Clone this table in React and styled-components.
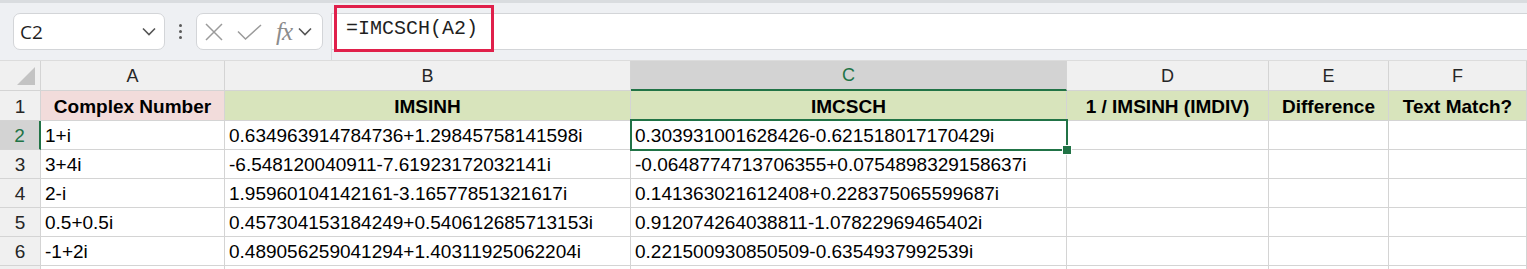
import React from "react";
import styled, { createGlobalStyle, css } from "styled-components";

const GREEN = "#217346";
const GRID = "#d4d4d4";

const GlobalStyle = createGlobalStyle`
  html, body {
    margin: 0;
    padding: 0;
    background: #ffffff;
    overflow: hidden;
  }
  * {
    box-sizing: border-box;
  }
`;

const columns = [
  { key: "A", width: 184 },
  { key: "B", width: 406 },
  { key: "C", width: 436 },
  { key: "D", width: 202 },
  { key: "E", width: 120 },
  { key: "F", width: null },
];

const headers = [
  "Complex Number",
  "IMSINH",
  "IMCSCH",
  "1 / IMSINH (IMDIV)",
  "Difference",
  "Text Match?",
];

const rows = [
  ["1+i", "0.634963914784736+1.29845758141598i", "0.303931001628426-0.621518017170429i"],
  ["3+4i", "-6.548120040911-7.61923172032141i", "-0.0648774713706355+0.0754898329158637i"],
  ["2-i", "1.95960104142161-3.16577851321617i", "0.141363021612408+0.228375065599687i"],
  ["0.5+0.5i", "0.457304153184249+0.540612685713153i", "0.912074264038811-1.07822969465402i"],
  ["-1+2i", "0.489056259041294+1.40311925062204i", "0.221500930850509-0.6354937992539i"],
];

const Page = styled.div`
  width: 1527px;
  height: 269px;
  overflow: hidden;
  font-family: "Liberation Sans", Arial, sans-serif;
`;

const Toolbar = styled.div`
  height: 60px;
  display: flex;
  align-items: flex-start;
  background: #eef0f3;
  border-top: 3px solid #d9dcdf;
  padding-top: 10px;
`;

const NameBox = styled.div`
  margin-left: 13px;
  width: 152px;
  height: 37px;
  background: #ffffff;
  border: 1px solid #d3d5d8;
  border-radius: 7px;
  display: flex;
  align-items: center;
  justify-content: space-between;
  padding: 0 8px 0 6px;
  font-family: "Open Sans", "Noto Sans", sans-serif;
  font-size: 19px;
  color: #1f1f1f;
`;

const Dots = styled.div`
  width: 31px;
  height: 37px;
  display: flex;
  flex-direction: column;
  align-items: center;
  justify-content: center;
  gap: 3px;
  span {
    width: 3px;
    height: 3px;
    border-radius: 50%;
    background: #5a5a5a;
  }
`;

const FxBox = styled.div`
  width: 127px;
  height: 37px;
  background: #ffffff;
  border: 1px solid #d3d5d8;
  border-radius: 7px;
  display: flex;
  align-items: center;
  padding-left: 8px;
  gap: 14px;
`;

const FxLabel = styled.span`
  font-family: "Liberation Serif", "DejaVu Serif", serif;
  font-style: italic;
  font-size: 25px;
  color: #8c8c8c;
  letter-spacing: -1px;
  margin-right: -8px;
`;

const FormulaArea = styled.div`
  flex: 1;
  margin-left: 8px;
  height: 47px;
  border-left: 1px solid #d6d8db;
  display: flex;
  align-items: flex-start;
`;

const FormulaInput = styled.div`
  flex: 1;
  height: 37px;
  background: #ffffff;
  border-top: 1px solid #d3d5d8;
  border-bottom: 1px solid #d3d5d8;
  display: flex;
  align-items: flex-start;
  padding-left: 2px;
`;

const Highlight = styled.span`
  margin-top: -9px;
  width: 160px;
  height: 47px;
  border: 3px solid #e0204b;
  display: flex;
  align-items: center;
  padding-left: 9px;
  padding-bottom: 1px;
  font-family: "Liberation Mono", "DejaVu Sans Mono", monospace;
  font-size: 20px;
  color: #1f1f1f;
`;

const Grid = styled.div`
  display: grid;
  grid-template-columns: 41px ${columns.map((c) => (c.width ? `${c.width}px` : "1fr")).join(" ")};
  grid-template-rows: 30px 30px repeat(6, 29px);
  border-top: 1px solid #dcdcdc;
`;

const headerBase = css`
  background: #f0f0f0;
  border-right: 1px solid ${GRID};
  border-bottom: 1px solid ${GRID};
  display: flex;
  align-items: center;
  justify-content: center;
  color: #262626;
`;

const Corner = styled.div`
  ${headerBase};
  position: relative;
  &::after {
    content: "";
    position: absolute;
    left: 17px;
    top: 6px;
    width: 18px;
    height: 18px;
    background: #c3c3c3;
    clip-path: polygon(100% 0, 100% 100%, 0 100%);
  }
`;

const ColHeader = styled.div`
  ${headerBase};
  font-size: 18px;
  padding-top: 1px;
  ${(p) =>
    p.$active &&
    css`
      background: #d3d3d3;
      color: ${GREEN};
      border-bottom: 2px solid ${GREEN};
    `}
`;

const RowHeader = styled.div`
  ${headerBase};
  font-size: 19px;
  padding-top: 2px;
  ${(p) =>
    p.$active &&
    css`
      background: #d3d3d3;
      color: ${GREEN};
      border-right: 2px solid ${GREEN};
    `}
`;

const Cell = styled.div`
  position: relative;
  border-right: 1px solid ${GRID};
  border-bottom: 1px solid ${GRID};
  display: flex;
  align-items: center;
  padding: 2px 4px 0;
  font-size: 19px;
  color: #000000;
  white-space: nowrap;
  background: ${(p) => p.$fill || "#ffffff"};
  ${(p) =>
    p.$bold &&
    css`
      font-weight: bold;
      justify-content: center;
    `}
  ${(p) =>
    p.$selected &&
    css`
      z-index: 2;
      &::after {
        content: "";
        position: absolute;
        left: -1px;
        top: -2px;
        right: -2px;
        bottom: -2px;
        border: 2px solid ${GREEN};
        pointer-events: none;
      }
      &::before {
        content: "";
        position: absolute;
        right: -6px;
        bottom: -6px;
        width: 8px;
        height: 8px;
        background: ${GREEN};
        border: 1px solid #ffffff;
        z-index: 3;
      }
    `}
`;

const Chevron = () => (
  <svg width="14" height="9" viewBox="0 0 14 9">
    <path d="M1 1.5 L7 7.5 L13 1.5" fill="none" stroke="#555" strokeWidth="1.6" />
  </svg>
);

const CloseIcon = () => (
  <svg width="18" height="18" viewBox="0 0 18 18">
    <path d="M1 1 L17 17 M17 1 L1 17" stroke="#9b9b9b" strokeWidth="1.5" fill="none" />
  </svg>
);

const CheckIcon = () => (
  <svg width="25" height="16" viewBox="0 0 25 16">
    <path d="M1 7.5 L8.5 15 L24 1" stroke="#9b9b9b" strokeWidth="1.5" fill="none" />
  </svg>
);

export default function App() {
  return (
    <Page>
      <GlobalStyle />
      <Toolbar>
        <NameBox>
          C2
          <Chevron />
        </NameBox>
        <Dots>
          <span />
          <span />
          <span />
        </Dots>
        <FxBox>
          <CloseIcon />
          <CheckIcon />
          <FxLabel>fx</FxLabel>
          <Chevron />
        </FxBox>
        <FormulaArea>
          <FormulaInput>
            <Highlight>=IMCSCH(A2)</Highlight>
          </FormulaInput>
        </FormulaArea>
      </Toolbar>
      <Grid>
        <Corner />
        {columns.map((c) => (
          <ColHeader key={c.key} $active={c.key === "C"}>
            {c.key}
          </ColHeader>
        ))}
        <RowHeader>1</RowHeader>
        {headers.map((h, i) => (
          <Cell key={h} $bold $fill={i === 0 ? "#f2dcdb" : "#d8e4bc"}>
            {h}
          </Cell>
        ))}
        {rows.map((r, ri) => (
          <React.Fragment key={ri}>
            <RowHeader $active={ri === 0}>{ri + 2}</RowHeader>
            {columns.map((c, ci) => (
              <Cell key={c.key} $selected={ri === 0 && ci === 2}>
                {r[ci] || ""}
              </Cell>
            ))}
          </React.Fragment>
        ))}
        <RowHeader />
        {columns.map((c) => (
          <Cell key={c.key} />
        ))}
      </Grid>
    </Page>
  );
}
